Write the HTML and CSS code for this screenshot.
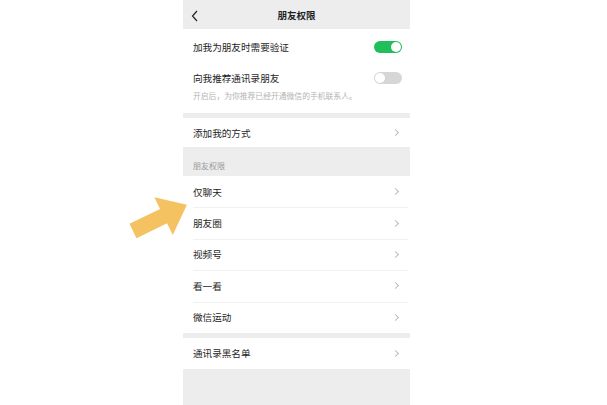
FILE: index.html
```html
<!DOCTYPE html>
<html lang="zh-CN">
<head>
    <meta charset="UTF-8">
    <meta name="viewport" content="width=device-width, initial-scale=1.0">
    <title>朋友权限</title>
    <link rel="stylesheet" href="styles.css">
</head>
<body>

    <!-- 指向“仅聊天”的箭头 -->
    <svg class="pointer" width="80" height="60" viewBox="0 0 80 60">
        <polygon points="0,-8 34,-8 34,-21 60,0 34,21 34,8 0,8"
                 transform="translate(7,43) rotate(-26)" fill="#f4c260"/>
    </svg>

    <div class="phone">
        <!-- 顶部标题栏 -->
        <div class="topbar">
            <svg class="back" width="8" height="12" viewBox="0 0 8 12">
                <polyline points="6,1 1.5,6 6,11" fill="none" stroke="#222" stroke-width="1.2"/>
            </svg>
            <span class="title">朋友权限</span>
        </div>

        <div class="group">
            <div class="row row-tall">
                <span>加我为朋友时需要验证</span>
                <span class="switch on"></span>
            </div>
            <div class="row row-desc">
                <div class="row-main">
                    <span>向我推荐通讯录朋友</span>
                    <span class="switch"></span>
                </div>
                <p class="desc">开启后，为你推荐已经开通微信的手机联系人。</p>
            </div>
        </div>

        <div class="gap"></div>

        <div class="group">
            <div class="row row-short">
                <span>添加我的方式</span>
                <span class="chevron"></span>
            </div>
        </div>

        <div class="label">朋友权限</div>

        <div class="group list">
            <div class="row"><span>仅聊天</span><span class="chevron"></span></div>
            <div class="row"><span>朋友圈</span><span class="chevron"></span></div>
            <div class="row"><span>视频号</span><span class="chevron"></span></div>
            <div class="row"><span>看一看</span><span class="chevron"></span></div>
            <div class="row"><span>微信运动</span><span class="chevron"></span></div>
        </div>

        <div class="gap"></div>

        <div class="group">
            <div class="row"><span>通讯录黑名单</span><span class="chevron"></span></div>
        </div>
    </div>

</body>
</html>
```

FILE: styles.css
```css
body {
    margin: 0;
    height: 405px;
    background-color: #fff;
    font-family: "Noto Sans CJK SC", "Noto Sans", sans-serif;
    position: relative;
    overflow: hidden;
}

/* 手机页面 */
.phone {
    margin-left: 183px;
    width: 227px;
    height: 405px;
    background-color: #ededed;
    color: #1e1e1e;
    font-size: 9.6px;
}

.topbar {
    height: 29px;
    display: flex;
    align-items: center;
    justify-content: center;
    position: relative;
}

.topbar .back {
    position: absolute;
    left: 8px;
    top: 10px;
}

.topbar .title {
    font-weight: bold;
    font-size: 9.5px;
}

.group {
    background-color: #fff;
}

.row {
    height: 31px;
    padding: 0 10px;
    display: flex;
    align-items: center;
    justify-content: space-between;
    box-sizing: border-box;
}

.row-tall {
    height: 33px;
    padding-top: 3px;
}

.row-short {
    height: 29px;
}

.row-desc {
    height: 51px;
    display: block;
    padding-top: 9px;
}

.row-main {
    display: flex;
    align-items: center;
    justify-content: space-between;
}

.desc {
    margin: 5px 0 0;
    font-size: 7.8px;
    color: #b4b4b4;
}

/* 列表分割线 */
.list .row {
    height: 31.4px;
    position: relative;
}

.list .row + .row::before {
    content: "";
    position: absolute;
    left: 10px;
    right: 2px;
    top: 0;
    border-top: 1px solid #f1f1f1;
}

.gap {
    height: 5px;
}

.label {
    height: 29px;
    box-sizing: border-box;
    padding: 13px 10px 0;
    font-size: 8px;
    color: #9a9a9a;
}

/* 开关 */
.switch {
    width: 28px;
    height: 12px;
    border-radius: 6px;
    background-color: #d6d6d6;
    position: relative;
    margin-right: -2px;
}

.switch::after {
    content: "";
    position: absolute;
    top: 1px;
    left: 1px;
    width: 10px;
    height: 10px;
    border-radius: 50%;
    background-color: #fff;
}

.switch.on {
    background-color: #1fbf5a;
}

.switch.on::after {
    left: auto;
    right: 1px;
}

.chevron {
    width: 4px;
    height: 4px;
    border-top: 1px solid #bcbcbc;
    border-right: 1px solid #bcbcbc;
    transform: rotate(45deg);
    margin-right: 2px;
}

.pointer {
    position: absolute;
    left: 126px;
    top: 188px;
}
```
